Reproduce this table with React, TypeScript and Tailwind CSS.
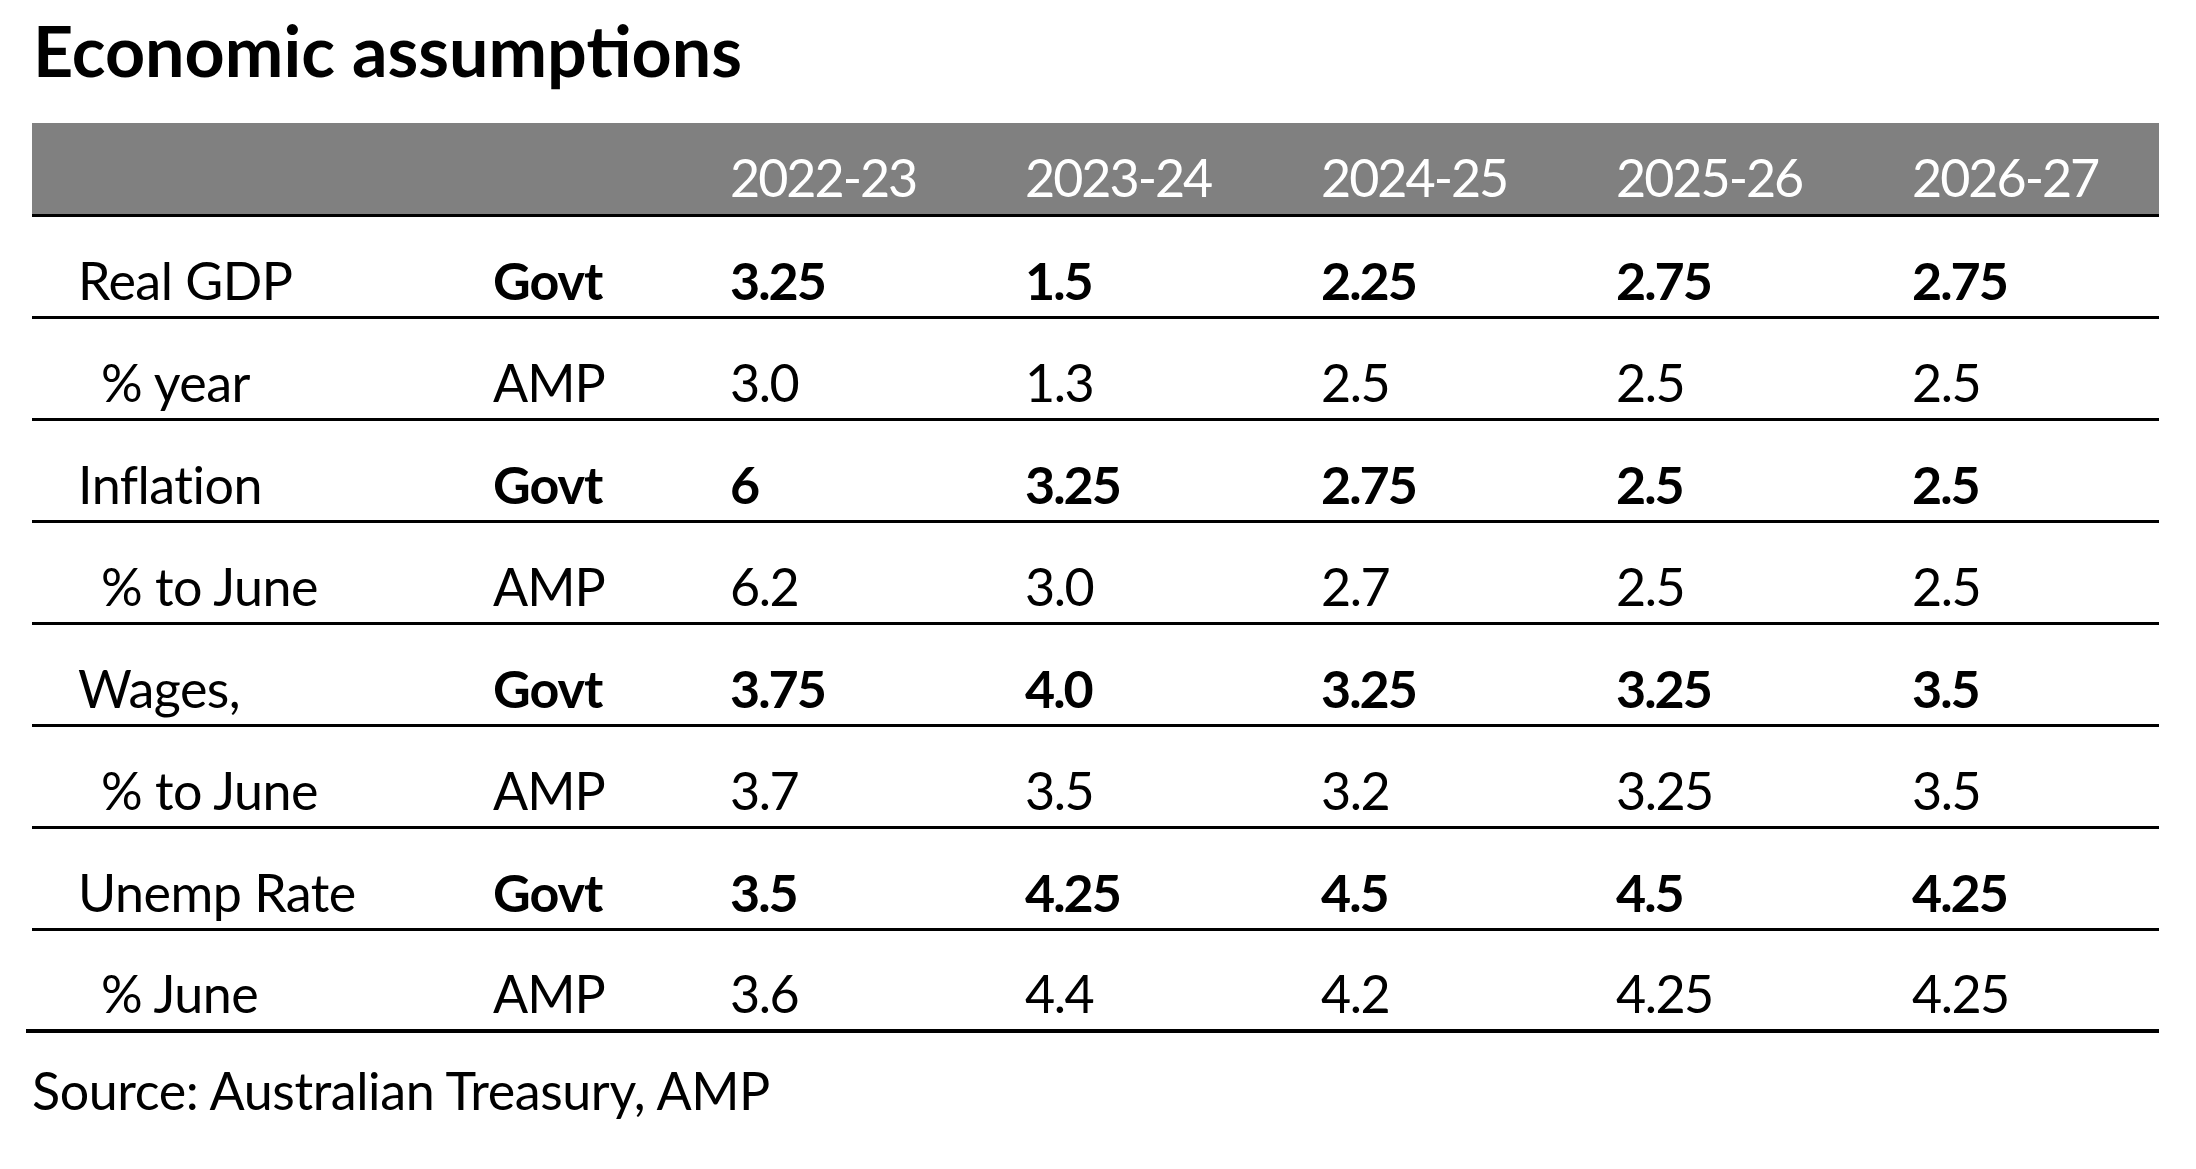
import React from "react";

type Row = { label: string; indent: boolean; src: string; bold: boolean; vals: string[] };

const rows: Row[] = [
  { label: "Real GDP", indent: false, src: "Govt", bold: true, vals: ["3.25", "1.5", "2.25", "2.75", "2.75"] },
  { label: "% year", indent: true, src: "AMP", bold: false, vals: ["3.0", "1.3", "2.5", "2.5", "2.5"] },
  { label: "Inflation", indent: false, src: "Govt", bold: true, vals: ["6", "3.25", "2.75", "2.5", "2.5"] },
  { label: "% to June", indent: true, src: "AMP", bold: false, vals: ["6.2", "3.0", "2.7", "2.5", "2.5"] },
  { label: "Wages,", indent: false, src: "Govt", bold: true, vals: ["3.75", "4.0", "3.25", "3.25", "3.5"] },
  { label: "% to June", indent: true, src: "AMP", bold: false, vals: ["3.7", "3.5", "3.2", "3.25", "3.5"] },
  { label: "Unemp Rate", indent: false, src: "Govt", bold: true, vals: ["3.5", "4.25", "4.5", "4.5", "4.25"] },
  { label: "% June", indent: true, src: "AMP", bold: false, vals: ["3.6", "4.4", "4.2", "4.25", "4.25"] },
];

const years = ["2022-23", "2023-24", "2024-25", "2025-26", "2026-27"];
const colW = ["w-[295px]", "w-[296px]", "w-[295px]", "w-[296px]", "w-[295px]"];

export default function App() {
  return (
    <div className="w-[2196px] h-[1169px] bg-white text-black font-['Lato','Noto_Sans',sans-serif] overflow-hidden">
      <h1 className="pl-[33px] pt-[15px] text-[70px] font-bold leading-none">Economic assumptions</h1>
      <div className="mt-[38px] ml-[26px] w-[2133px]">
        <div className="ml-[6px] flex items-end h-[94px] bg-[#808080] border-b-[3px] border-black pb-[11px] text-white text-[52px] leading-none tracking-[-2px]">
          <div className="w-[461px] shrink-0" />
          <div className="w-[237px] shrink-0" />
          {years.map((y, j) => (
            <div key={y} className={`${colW[j]} shrink-0`}>
              {y}
            </div>
          ))}
        </div>
        {rows.map((r, i) => {
          const last = i === rows.length - 1;
          return (
            <div
              key={i}
              className={`ml-[6px] flex items-end text-[52px] leading-none pb-[10px] ${
                last ? "h-[98px]" : "h-[102px] border-b-[3px] border-black"
              }`}
            >
              <div
                className={`w-[461px] shrink-0 tracking-[-0.5px] ${r.indent ? "pl-[69px]" : "pl-[46px]"}`}
              >
                {r.label}
              </div>
              <div className={`w-[237px] shrink-0 tracking-[-1px] ${r.bold ? "font-bold" : ""}`}>{r.src}</div>
              {r.vals.map((v, j) => (
                <div
                  key={j}
                  className={`${colW[j]} shrink-0 ${r.bold ? "font-bold tracking-[-2px]" : "tracking-[-1.5px]"}`}
                >
                  {v}
                </div>
              ))}
            </div>
          );
        })}
        <div className="h-[4px] bg-black" />
      </div>
      <div className="pl-[32px] pt-[31px] text-[52px] leading-none tracking-[-0.4px]">
        Source: Australian Treasury, AMP
      </div>
    </div>
  );
}
